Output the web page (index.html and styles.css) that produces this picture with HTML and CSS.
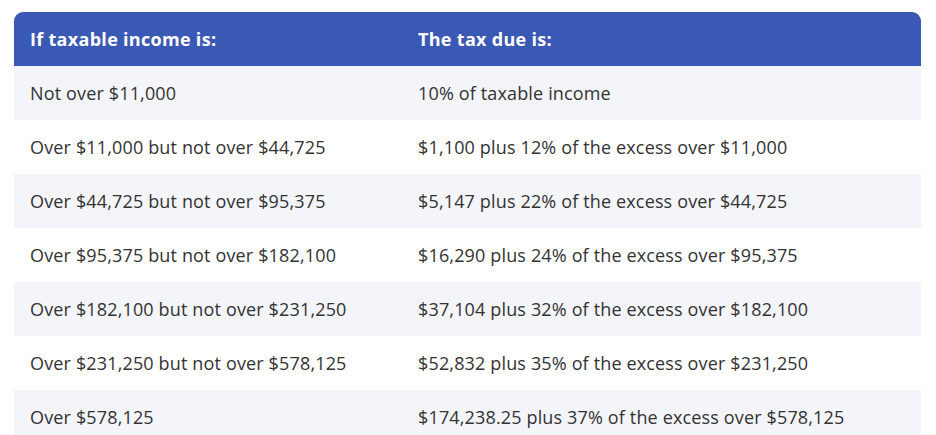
FILE: index.html
```html
<!DOCTYPE html>
<html>
<head>
<meta charset="utf-8">
<link rel="stylesheet" href="styles.css">
</head>
<body>
<table class="tax">
  <thead>
    <tr><th class="c1">If taxable income is:</th><th>The tax due is:</th></tr>
  </thead>
  <tbody>
    <tr><td>Not over $11,000</td><td>10% of taxable income</td></tr>
    <tr><td>Over $11,000 but not over $44,725</td><td>$1,100 plus 12% of the excess over $11,000</td></tr>
    <tr><td>Over $44,725 but not over $95,375</td><td>$5,147 plus 22% of the excess over $44,725</td></tr>
    <tr><td>Over $95,375 but not over $182,100</td><td>$16,290 plus 24% of the excess over $95,375</td></tr>
    <tr><td>Over $182,100 but not over $231,250</td><td>$37,104 plus 32% of the excess over $182,100</td></tr>
    <tr><td>Over $231,250 but not over $578,125</td><td>$52,832 plus 35% of the excess over $231,250</td></tr>
    <tr><td>Over $578,125</td><td>$174,238.25 plus 37% of the excess over $578,125</td></tr>
  </tbody>
</table>
</body>
</html>
```
FILE: styles.css
```css
html, body { margin: 0; padding: 0; background: #fff; }
body { padding: 12px 15px 0 14px; font-family: "Open Sans", "Liberation Sans", sans-serif; }
.tax {
  width: 907px;
  border-collapse: separate;
  border-spacing: 0;
  color: #333;
  font-size: 18px;
  letter-spacing: 0.15px;
}
.tax th {
  background: #3a59b4;
  color: #fff;
  font-weight: 700;
  text-align: left;
  height: 54px;
  padding: 0 0 0 16px;
  font-size: 18px;
  letter-spacing: 0.3px;
}
.tax th.c1 { border-top-left-radius: 9px; width: 372px; }
.tax th:last-child { border-top-right-radius: 9px; }
.tax td { height: 54px; padding: 0 0 0 16px; }
.tax tbody tr:nth-child(odd) td { background: #f4f5fa; }
```
